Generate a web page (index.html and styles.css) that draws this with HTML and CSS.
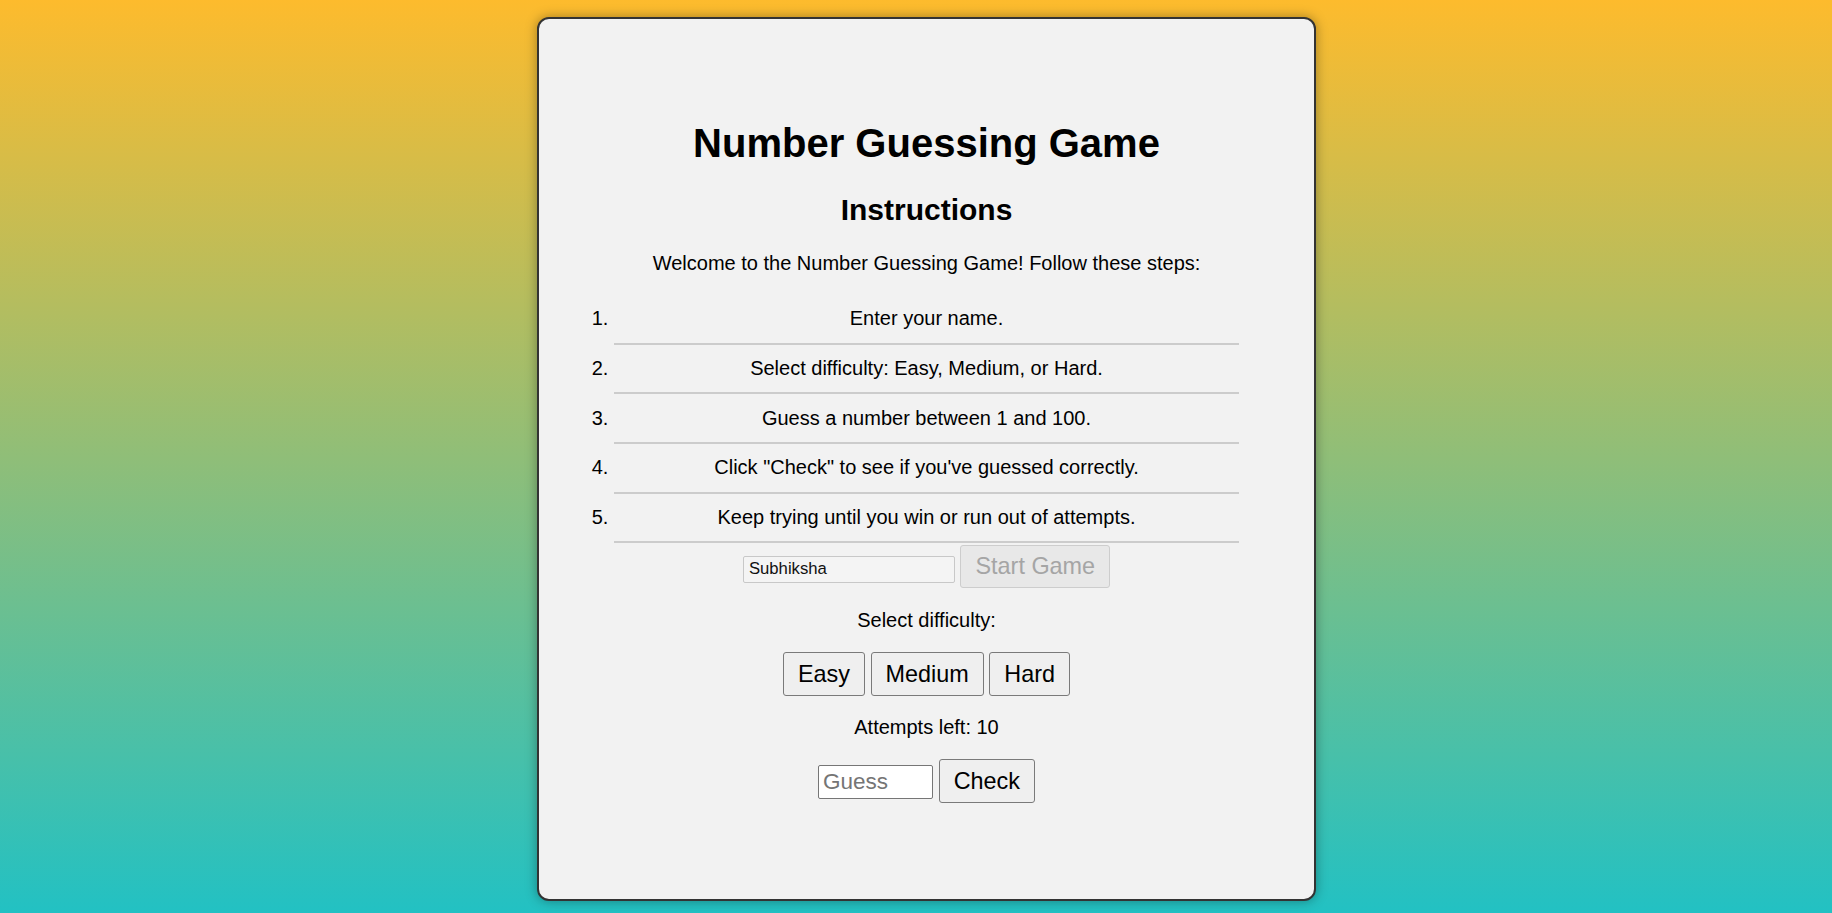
FILE: index.html
```html
<!DOCTYPE html>
<html lang="en">
<head>
<meta charset="utf-8">
<title>Number Guessing Game</title>
<link rel="stylesheet" href="styles.css">
</head>
<body>
  <main class="card">
    <h1 class="title">Number Guessing Game</h1>
    <h2 class="subtitle">Instructions</h2>
    <p class="text">Welcome to the Number Guessing Game! Follow these steps:</p>
    <ol class="steps">
      <li>Enter your name.</li>
      <li>Select difficulty: Easy, Medium, or Hard.</li>
      <li>Guess a number between 1 and 100.</li>
      <li>Click "Check" to see if you've guessed correctly.</li>
      <li>Keep trying until you win or run out of attempts.</li>
    </ol>
    <div class="row name-row"><input class="name-input" type="text" value="Subhiksha" disabled> <button class="btn btn-disabled" disabled>Start Game</button></div>
    <p class="text">Select difficulty:</p>
    <div class="row"><button class="btn">Easy</button> <button class="btn">Medium</button> <button class="btn">Hard</button></div>
    <p class="text">Attempts left: 10</p>
    <div class="row"><input class="guess-input" type="number" placeholder="Guess"> <button class="btn">Check</button></div>
  </main>
</body>
</html>
```

FILE: styles.css
```css
html {
  height: 100%;
}

body {
  margin: 0;
  min-height: 100vh;
  box-sizing: border-box;
  padding: 17px 0 0 21px;
  display: flex;
  justify-content: center;
  align-items: flex-start;
  background: linear-gradient(0deg, rgb(34, 193, 195) 0%, rgb(253, 187, 45) 100%);
  font-family: "Liberation Sans", Arial, sans-serif;
}

.card {
  width: 779px;
  height: 884px;
  box-sizing: border-box;
  padding: 101.5px 25px 0;
  background: #f2f2f2;
  border: 2px solid #333333;
  border-radius: 12px;
  box-shadow: 0 0 12px rgba(0, 0, 0, 0.35);
  text-align: center;
  font-size: 20px;
  color: #000;
}

.title {
  font-size: 40px;
  font-weight: bold;
  margin: 0 0 27.8px;
  line-height: normal;
}

.subtitle {
  font-size: 30px;
  font-weight: bold;
  margin: 24.9px 0;
  line-height: normal;
}

.text {
  margin: 20px 0;
}

.steps {
  margin: 20px 0 0;
  padding: 0 50px;
}

.steps li {
  padding: 12.3px 0;
  border-bottom: 2px solid #cccccc;
}

.row {
  line-height: normal;
}

.name-row {
  padding: 1.5px 0 1px;
}

.btn {
  font-family: "Liberation Sans", Arial, sans-serif;
  font-size: 23.4px;
  line-height: normal;
  padding: 7.4px 14px;
  margin: 0;
  background: #efefef;
  color: #000;
  border: 1px solid #7a7a7a;
  border-radius: 3px;
}

.btn-disabled {
  background: #e8e8e8;
  color: #a5a5a5;
  border-color: #cdcdcd;
}

.name-input {
  width: 212px;
  height: 27px;
  box-sizing: border-box;
  margin: 0;
  padding: 1px 5px;
  font-family: "Liberation Sans", Arial, sans-serif;
  font-size: 16.7px;
  color: #111;
  background: #f4f4f4;
  border: 1px solid #c8c8c8;
  border-radius: 2px;
}

.guess-input {
  width: 115px;
  height: 34px;
  box-sizing: border-box;
  margin: 0;
  padding: 2px 4px;
  font-family: "Liberation Sans", Arial, sans-serif;
  font-size: 22.5px;
  color: #000;
  background: #fff;
  border: 1px solid #767676;
  border-radius: 2px;
  -moz-appearance: textfield;
}

.guess-input::-webkit-outer-spin-button,
.guess-input::-webkit-inner-spin-button {
  -webkit-appearance: none;
  margin: 0;
}

.guess-input::placeholder {
  color: #757575;
}
```
